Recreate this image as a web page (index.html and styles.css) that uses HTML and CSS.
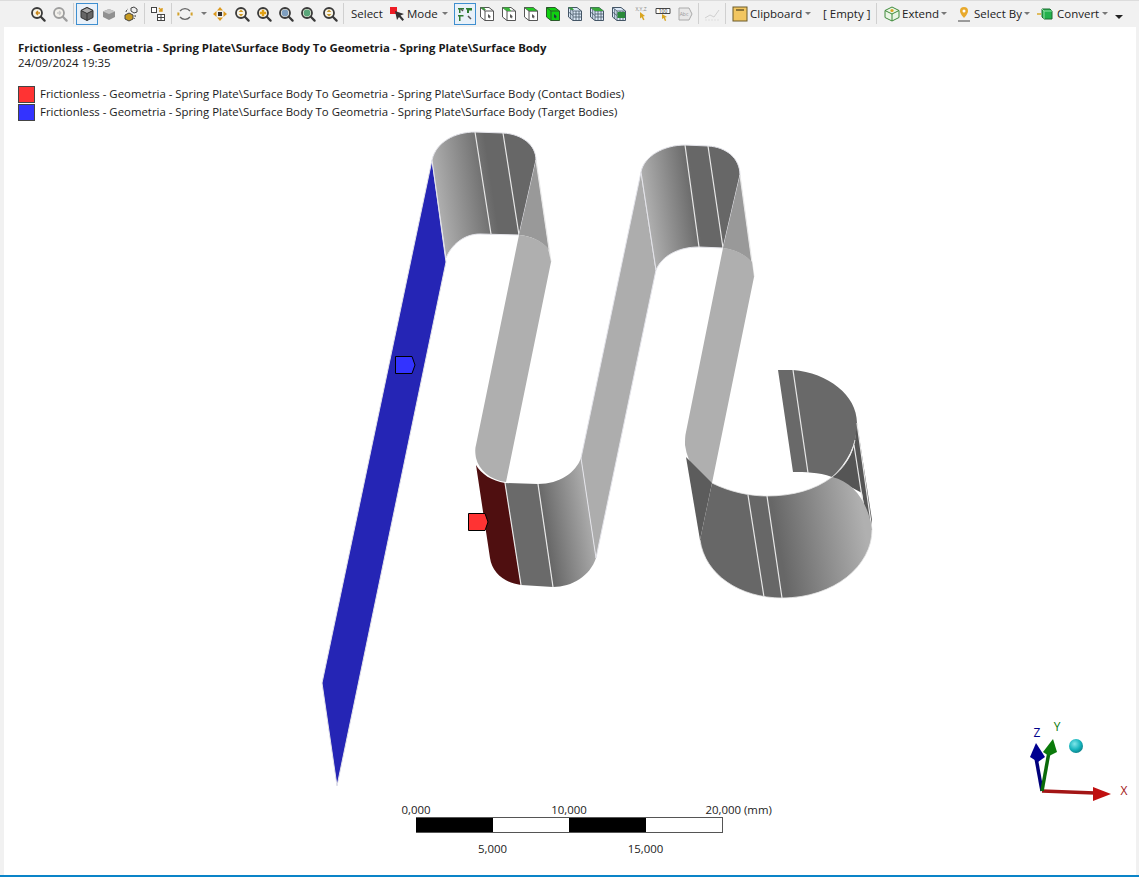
FILE: index.html
```html
<!DOCTYPE html>
<html lang="en">
  <head>
    <meta charset="UTF-8" />
    <meta name="viewport" content="width=device-width, initial-scale=1.0" />
    <title>Frictionless contact</title>
    <link rel="stylesheet" href="styles.css">
  </head>
  <body>
    <svg class="defs" width="0" height="0">
      <symbol id="lens" viewBox="0 0 16 16">
        <circle cx="7" cy="7" r="5" fill="#f7f3e6" stroke="#3a3a3a" stroke-width="1.8" />
        <path d="M10.8 10.8L14.6 14.6" stroke="#3a3a3a" stroke-width="2.2" stroke-linecap="round" />
      </symbol>
      <symbol id="cube" viewBox="0 0 16 16">
        <path d="M1.5 1.5H10L14.5 5V14.5H6L1.5 11Z" fill="#fff" stroke="#555" />
        <path d="M1.5 1.5L6 5H14.5M6 5V14.5" fill="none" stroke="#555" />
        <path d="M9 8l3 2.5-1.2.3.7 1.3-.8.4-.7-1.3-1 .8Z" fill="#555" />
      </symbol>
      <symbol id="gridcube" viewBox="0 0 16 16">
        <path d="M1.5 1.5H10L14.5 5V14.5H6L1.5 11Z" fill="#dbe8f6" stroke="#456" />
        <path d="M1.5 1.5L6 5H14.5M6 5V14.5M9 5V14.5M12 5V14.5M6 8H14.5M6 11H14.5M3.7 3.2V12.7M1.5 6L6 9.5" fill="none" stroke="#456" stroke-width=".8" />
      </symbol>
      <linearGradient id="arch1" gradientUnits="userSpaceOnUse" x1="438" y1="195" x2="492" y2="187">
        <stop offset="0" stop-color="#adadad" />
        <stop offset="1" stop-color="#676767" />
      </linearGradient>
      <linearGradient id="arch2" gradientUnits="userSpaceOnUse" x1="648" y1="210" x2="696" y2="203">
        <stop offset="0" stop-color="#adadad" />
        <stop offset="1" stop-color="#676767" />
      </linearGradient>
      <linearGradient id="bend" gradientUnits="userSpaceOnUse" x1="545" y1="530" x2="592" y2="522">
        <stop offset="0" stop-color="#676767" />
        <stop offset="1" stop-color="#adadad" />
      </linearGradient>
      <linearGradient id="coil" gradientUnits="userSpaceOnUse" x1="780" y1="550" x2="866" y2="535">
        <stop offset="0" stop-color="#676767" />
        <stop offset="1" stop-color="#b0b0b0" />
      </linearGradient>
      <radialGradient id="ball" cx=".4" cy=".35" r=".7">
        <stop offset="0" stop-color="#7fe6ea" />
        <stop offset=".6" stop-color="#16b4bd" />
        <stop offset="1" stop-color="#0b7c84" />
      </radialGradient>
    </svg>

    <div class="toolbar">
      <span class="grip"></span>
      <span class="btn"><svg class="ico"><use href="#lens" /><path d="M11 6H7M7 6l2-2M7 6l2 2" fill="none" stroke="#c9871c" stroke-width="1.4" transform="translate(-1 1)" /></svg></span>
      <span class="btn faded"><svg class="ico"><use href="#lens" /><path d="M5 7h4M9 7L7 5M9 7L7 9" fill="none" stroke="#999" stroke-width="1.3" /></svg></span>
      <span class="sep"></span>
      <span class="btn on"><svg class="ico"><path d="M8 1.5L14 4.5V11.5L8 14.5L2 11.5V4.5Z" fill="#666" stroke="#333" /><path d="M2 4.5L8 1.5L14 4.5L8 7.5Z" fill="#aaa" stroke="#333" /><path d="M8 7.5V14.5" stroke="#333" /></svg></span>
      <span class="btn"><svg class="ico"><path d="M8 3L14 5.5V11L8 14L2 11V5.5Z" fill="#909090" /><path d="M2 5.5L8 3L14 5.5L8 8Z" fill="#c4c4c4" /></svg></span>
      <span class="btn"><svg class="ico"><path d="M2 9L6 7L10 9V13L6 15L2 13Z" fill="#c79a20" stroke="#444" /><path d="M8 2L11 1L14 3V6L11 7L8 5Z" fill="#eee" stroke="#444" /><path d="M12 9a4 4 0 0 1 -1 4M3 6a4 4 0 0 1 2 -3" fill="none" stroke="#444" stroke-dasharray="2 1" /></svg></span>
      <span class="sep"></span>
      <span class="btn"><svg class="ico"><rect x="1.5" y="1.5" width="5" height="5" fill="#fff" stroke="#444" /><rect x="7.5" y="8.5" width="7" height="6" fill="#fff" stroke="#444" /><path d="M11 8.5v6M7.5 11.5h7" stroke="#444" /><path d="M9 2l3 3M12 2v3H9" fill="none" stroke="#d89a1c" stroke-width="1.4" /></svg></span>
      <span class="sep"></span>
      <span class="btn"><svg class="ico"><path d="M3 5A6.5 6.5 0 0 1 13 5" fill="none" stroke="#666" stroke-width="1.3" /><path d="M13 11A6.5 6.5 0 0 1 3 11" fill="none" stroke="#666" stroke-width="1.3" /><path d="M1.5 6.5a6.5 6.5 0 0 0 0 3" fill="none" stroke="#d3a22c" stroke-width="2" /><path d="M14.5 6.5a6.5 6.5 0 0 1 0 3" fill="none" stroke="#d3a22c" stroke-width="2" /></svg></span>
      <span class="caret-btn"><i class="caret"></i></span>
      <span class="btn"><svg class="ico"><path d="M8 1L11 4.5H5ZM8 15L5 11.5H11ZM1 8L4.5 5V11ZM15 8L11.5 11V5Z" fill="#dd9a1e" /><rect x="6" y="6" width="4" height="4" fill="#333" /></svg></span>
      <span class="btn"><svg class="ico"><use href="#lens" /><path d="M7 3.5L9.3 6H4.7ZM7 10.5L4.7 8H9.3Z" fill="#d19a25" /></svg></span>
      <span class="btn"><svg class="ico"><use href="#lens" /><path d="M7 3.8v6.4M3.8 7h6.4" stroke="#e0a016" stroke-width="2.4" /></svg></span>
      <span class="btn"><svg class="ico"><use href="#lens" /><circle cx="7" cy="7" r="3.4" fill="#7f9fc0" /></svg></span>
      <span class="btn"><svg class="ico"><use href="#lens" /><circle cx="7" cy="7" r="3.4" fill="#5aa67a" /></svg></span>
      <span class="btn"><svg class="ico"><use href="#lens" /><path d="M7 3.5L9.3 6H4.7ZM7 10.5L4.7 8H9.3Z" fill="#c79a2f" /></svg></span>
      <span class="sep"></span>
      <span class="tb-text w-select">Select</span>
      <span class="btn-s"><svg class="ico"><rect x="0" y="1" width="7" height="7" fill="#ee1c25" /><path d="M5 5l9 3-3.5 1.5 3.5 4-1.5 1.5-3.5-4L7 14Z" fill="#333" /></svg></span>
      <span class="tb-text w-mode">Mode</span><i class="caret"></i>
      <span class="btn on first-sel"><svg class="ico"><path d="M1 2h6v1.5H3.5V7H2V3.5H1ZM9 2h6v2.5h-3V7h-2V3.5H9ZM1 9h5.5v1.5H3.5V15H2v-4.5H1Z" fill="#2e7d32" /><path d="M4 3l2 2M11 10l3 3" stroke="#555" stroke-width="1.5" /></svg></span>
      <span class="btn"><svg class="ico"><use href="#cube" /><path d="M1.5 1.5H5L7 4H4.5Z" fill="#3b9a3b" /></svg></span>
      <span class="btn"><svg class="ico"><use href="#cube" /><path d="M1.5 1.5H8L10 5H6Z" fill="#3bb53b" /></svg></span>
      <span class="btn"><svg class="ico"><use href="#cube" /><path d="M1.5 1.5H10L14.5 5H6Z" fill="#22cc22" stroke="#555" stroke-width=".6" /></svg></span>
      <span class="btn"><svg class="ico"><path d="M1.5 1.5H10L14.5 5V14.5H6L1.5 11Z" fill="#10d010" stroke="#2a5a2a" /><path d="M1.5 1.5L6 5H14.5M6 5V14.5" fill="none" stroke="#2a5a2a" /><path d="M9 8l3 2.5-1.2.3.7 1.3-.8.4-.7-1.3-1 .8Z" fill="#234" /></svg></span>
      <span class="btn"><svg class="ico"><use href="#gridcube" /><path d="M1.5 1.5H5L7 4H4.5Z" fill="#3aa03a" /></svg></span>
      <span class="btn"><svg class="ico"><use href="#gridcube" /><path d="M1.5 1.5H10L14.5 5H6Z" fill="#38a838" /></svg></span>
      <span class="btn"><svg class="ico"><use href="#gridcube" /><path d="M6.5 6H14V12H6.5Z" fill="#2a8a3a" /></svg></span>
      <span class="btn"><svg class="ico"><text x="8" y="5" class="tiny">X,Y,Z</text><path d="M7 6l5 4-2 .5 1.5 3-1.3.7-1.5-3-1.7 1.2Z" fill="#d9a520" /></svg></span>
      <span class="btn"><svg class="ico"><path d="M1 2.5h14v5H1Z" fill="#fff" stroke="#444" /><text x="8" y="6.6" class="tiny dark">100</text><path d="M7 8l5 3-2 .5 1.2 3-1.3.5-1.2-3-1.7 1Z" fill="#d9a520" /></svg></span>
      <span class="btn"><svg class="ico"><path d="M2 2h10l3 6-3 6H2Z" fill="#e8e8e8" stroke="#aaa" /><text x="7" y="10" class="tiny soft">Abc</text></svg></span>
      <span class="sep"></span>
      <span class="btn faded"><svg class="ico"><path d="M1 12L6 9L10 11L15 4" fill="none" stroke="#aaa" /><path d="M1 14h14" stroke="#ccc" stroke-dasharray="2 1" /></svg></span>
      <span class="sep"></span>
      <span class="btn-s clip"><svg class="ico"><rect x="1" y="1" width="14" height="14" fill="#f2c661" stroke="#6b5a2a" /><path d="M4 4h8" stroke="#6b5a2a" stroke-width="1.5" /></svg></span>
      <span class="tb-text w-clip">Clipboard</span><i class="caret"></i>
      <span class="tb-text w-empty">[ Empty ]</span>
      <span class="sep"></span>
      <span class="btn-s ext"><svg class="ico"><path d="M8 1L15 4.5V11.5L8 15L1 11.5V4.5Z" fill="#e9f5e4" stroke="#3e8a3a" /><path d="M1 4.5L8 8L15 4.5M8 8V15" fill="none" stroke="#3e8a3a" /><circle cx="8" cy="4.5" r="1.6" fill="#d9a520" /></svg></span>
      <span class="tb-text w-extend">Extend</span><i class="caret"></i>
      <span class="btn-s sel-by"><svg class="ico"><path d="M8 1a4 4 0 0 1 4 4c0 3-4 7-4 7S4 8 4 5a4 4 0 0 1 4-4Z" fill="#e8a92c" /><circle cx="8" cy="5" r="1.5" fill="#fff" /><path d="M2 15h12" stroke="#444" /></svg></span>
      <span class="tb-text w-selby">Select By</span><i class="caret"></i>
      <span class="btn-s conv"><svg class="ico"><path d="M0 8h4" stroke="#d9a520" stroke-width="1.4" /><path d="M5 3H13L15 5V13H7L5 11Z" fill="#22b14c" stroke="#1c6b30" /><path d="M5 3L7 5H15M7 5v8" fill="none" stroke="#8fe0a4" /></svg></span>
      <span class="tb-text w-conv">Convert</span><i class="caret"></i>
      <span class="overflow"></span>
    </div>

    <div class="viewport">
      <svg class="model" width="1132" height="848" viewBox="4 27 1132 848">
        <!-- plate -->
        <path class="edge" d="M432 160L446 262L337 786L322 683Z" fill="#2525b5" />

        <!-- first arch -->
        <path class="edge" d="M432 160C436 142 455 132 475 132L503 133C522 134 536 145 536 160L519 235L480 234C463 234 451 246 446 258Z" fill="url(#arch1)" />
        <path class="line" d="M475 132L491 234M503 133L519 235" />
        <path d="M536 160L549 250C542 241 531 236 519 235Z" fill="#999" />
        <path class="line" d="M536 160L551 262" />
        <path d="M519 235C531 236 542 241 548 248L551 262L506 482C490 480 479 470 476 458C475 452 475 448 476 445Z" fill="#afafaf" />

        <!-- first bend -->
        <path d="M476 465C481 474 492 481 505 483L521 585C504 583 492 572 490 558Z" fill="#4f0f10" />
        <path d="M505 483L538 484L553 587L521 585Z" fill="#6a6a6a" />
        <path d="M538 484C560 484 576 472 581 458L596 558C590 576 572 587 553 587Z" fill="url(#bend)" />
        <path class="line" d="M505 483L521 585M538 484L553 587" />

        <!-- middle strip -->
        <path class="edge" d="M641 172L656 270L596 558L581 458Z" fill="#adadad" />

        <!-- second arch -->
        <path class="edge" d="M641 172C644 156 664 145 685 145L708 146C726 147 740 158 740 175L723 248L699 247C678 247 662 256 656 270Z" fill="url(#arch2)" />
        <path class="line" d="M685 145L699 247M708 146L723 248" />
        <path d="M740 175L752 263C746 255 736 250 723 248Z" fill="#999" />
        <path class="line" d="M740 175L754 277" />
        <path d="M723 248C735 249 746 255 752 262L754 277L712 483C698 477 688 465 685 445C685 440 685 436 686 432Z" fill="#afafaf" />

        <!-- coil -->
        <path d="M778 370L793 370C828 373 857 395 857 423C857 445 847 463 832 477C818 472 805 472 793 472Z" fill="#696969" />
        <path class="line" d="M793 370L808 473" />
        <path d="M857 423L872 520L870 540L862 493L832 477C846 465 853 455 855 440Z" fill="#555" />
        <path class="line" d="M857 423L872 530M854 445L869 542" />
        <path d="M686 457L712 483L700 540Z" fill="#5c5c5c" />
        <path d="M712 483C730 492 750 496 767 496C792 496 815 490 832 477C855 482 869 505 872 530C872 565 835 598 782 598C740 598 705 575 700 540Z" fill="url(#coil)" />
        <path class="line" d="M748 495L764 597M767 496L782 598" />
        <path class="edge-top" d="M712 483C730 492 750 496 767 496C792 496 815 490 832 477C843 470 852 455 855 440" />
        <path class="edge-top" d="M700 540C705 575 740 598 782 598C835 598 872 565 872 530" />

        <!-- contact markers -->
        <path class="mark" d="M395.5 356.5H412L415 365L412 373.5H395.5Z" fill="#3333ff" />
        <path class="mark" d="M468.5 513.5H485L488 522L485 530.5H468.5Z" fill="#ff3333" />

        <!-- triad -->
        <path d="M1042 791L1095 793" stroke="#a31515" stroke-width="3.5" />
        <path d="M1093 787L1111 794L1093 801Z" fill="#c01010" />
        <path d="M1042 791L1036 758" stroke="#00007a" stroke-width="3.5" />
        <path d="M1036 743L1045 757L1038 762L1030 757Z" fill="#000090" />
        <path d="M1042 791L1049 752" stroke="#0a6a0a" stroke-width="3.5" />
        <path d="M1053 739L1057 752L1049 756L1043 752Z" fill="#0b7a0b" />
        <circle cx="1076" cy="746" r="7" fill="url(#ball)" />
        <text class="axis ax-z" x="1037" y="737">Z</text>
        <text class="axis ax-y" x="1057" y="731">Y</text>
        <text class="axis ax-x" x="1124" y="795">X</text>
      </svg>

      <div class="head">
        <div class="title">Frictionless - Geometria - Spring Plate\Surface Body To Geometria - Spring Plate\Surface Body</div>
        <div class="date">24/09/2024 19:35</div>
      </div>
      <div class="legend">
        <div class="legend-row"><span class="swatch red"></span>Frictionless - Geometria - Spring Plate\Surface Body To Geometria - Spring Plate\Surface Body (Contact Bodies)</div>
        <div class="legend-row"><span class="swatch blue"></span>Frictionless - Geometria - Spring Plate\Surface Body To Geometria - Spring Plate\Surface Body (Target Bodies)</div>
      </div>

      <div class="scale">
        <div class="scale-top">
          <span>0,000</span>
          <span>10,000</span>
          <span class="unit">20,000 (mm)</span>
        </div>
        <div class="scale-bar">
          <span class="black"></span><span></span><span class="black"></span><span></span>
        </div>
        <div class="scale-bottom">
          <span>5,000</span>
          <span>15,000</span>
        </div>
      </div>
    </div>
  </body>
</html>
```

FILE: styles.css
```css
* {
  margin: 0;
  padding: 0;
  box-sizing: border-box;
}
html,
body {
  height: 100%;
}
body {
  display: flex;
  flex-direction: column;
  overflow: hidden;
  font-family: "Open Sans", "Liberation Sans", sans-serif;
  font-size: 11.4px;
  color: #1a1a1a;
  background-color: #f1f1f1;
  border-bottom: 2px solid #0a84c8;
}
.defs {
  position: absolute;
}
.toolbar {
  display: flex;
  align-items: center;
  height: 27px;
  flex: none;
  padding-bottom: 1px;
  border-top: 1px solid #dcdcdc;
  font-size: 11.5px;
  white-space: nowrap;
}
.grip {
  width: 7px;
  height: 19px;
  margin: 0 7px 0 13px;
  background-image: radial-gradient(#a8a8a8 35%, transparent 40%);
  background-size: 2px 2px;
}
.btn,
.btn-s {
  display: flex;
  align-items: center;
  justify-content: center;
  flex: none;
  height: 22px;
  width: 22px;
  border: 1px solid transparent;
}
.btn-s {
  width: 16px;
}
.btn.on {
  border-color: #3f8fd0;
  background-color: #e9f1f9;
}
.first-sel {
  margin-left: 6px;
}
.faded {
  opacity: 0.45;
}
.ico {
  width: 16px;
  height: 16px;
  overflow: visible;
}
.tiny {
  font-size: 5px;
  text-anchor: middle;
  fill: #888;
}
.tiny.dark {
  fill: #222;
}
.tiny.soft {
  fill: #999;
}
.sep {
  flex: none;
  width: 1px;
  height: 21px;
  margin: 0 2px;
  background-color: #d0d0d0;
}
.caret-btn {
  display: flex;
  flex: none;
  width: 13px;
  justify-content: center;
}
.caret {
  display: block;
  flex: none;
  width: 0;
  height: 0;
  margin-left: 3px;
  border-left: 3.5px solid transparent;
  border-right: 3.5px solid transparent;
  border-top: 3.5px solid #777;
}
.tb-text {
  flex: none;
  color: #222;
}
.w-select {
  width: 39px;
  margin-left: 5px;
}
.w-mode {
  width: 32px;
  margin-left: 1px;
}
.w-clip {
  width: 52px;
  margin-left: 2px;
}
.clip {
  margin-left: 4px;
}
.w-empty {
  width: 48px;
  margin: 0 3px 0 12px;
}
.ext {
  margin-left: 5px;
}
.w-extend {
  width: 36px;
  margin-left: 2px;
}
.sel-by {
  margin-left: 9px;
}
.w-selby {
  width: 47px;
  margin-left: 2px;
}
.conv {
  margin-left: 7px;
}
.w-conv {
  width: 42px;
  margin-left: 4px;
}
.overflow {
  width: 8px;
  height: 6px;
  margin: 8px 0 0 7px;
  border-left: 4px solid transparent;
  border-right: 4px solid transparent;
  border-top: 4px solid #222;
}
.viewport {
  position: relative;
  flex: 1;
  margin: 0 3px 0 4px;
  padding: 13px 0 0 14px;
  background-color: #fff;
}
.model {
  position: absolute;
  left: 0;
  top: 0;
}
.edge {
  stroke: #e4e4ea;
  stroke-width: 1;
}
.edge-top {
  fill: none;
  stroke: #e6e6e6;
  stroke-width: 0.8;
}
.line {
  fill: none;
  stroke: #e8e8e8;
  stroke-width: 1.2;
}
.mark {
  stroke: #000;
  stroke-width: 1;
}
.axis {
  font-size: 12px;
  text-anchor: middle;
}
.ax-z {
  fill: #00008b;
}
.ax-y {
  fill: #0a7a0a;
}
.ax-x {
  fill: #a31515;
}
.head,
.legend,
.scale {
  position: relative;
}
.title {
  font-weight: 700;
  line-height: 15px;
}
.date {
  line-height: 15px;
}
.legend {
  margin-top: 14px;
}
.legend-row {
  display: flex;
  align-items: center;
  gap: 5px;
  height: 18px;
}
.swatch {
  width: 17px;
  height: 17px;
  margin-top: 2px;
  border: 1px solid #444;
}
.red {
  background-color: #ff3333;
}
.blue {
  background-color: #3333ff;
}
.scale {
  position: absolute;
  left: 335.5px;
  top: 775px;
  width: 460px;
  color: #222;
}
.scale-top,
.scale-bottom {
  display: grid;
  grid-template-columns: repeat(3, 153px);
  line-height: 15px;
  text-align: center;
}
.unit {
  text-align: left;
  padding-left: 60px;
}
.scale-bar {
  display: grid;
  grid-template-columns: repeat(4, 1fr);
  height: 16px;
  margin: 0 76.5px;
  border: 1px solid #555;
  border-width: 1px 1px 1px 0;
}
.black {
  background-color: #000;
}
.scale-bottom {
  grid-template-columns: repeat(2, 153px);
  margin: 8px 0 0 76.5px;
}
```
